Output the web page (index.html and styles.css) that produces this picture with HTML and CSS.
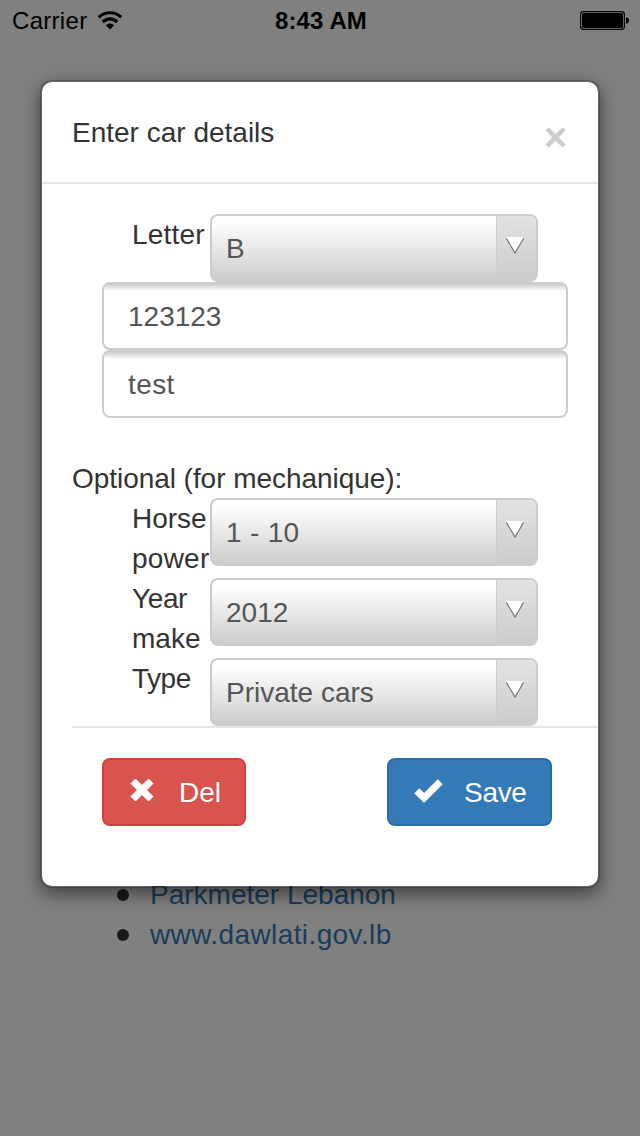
FILE: index.html
```html
<!DOCTYPE html>
<html lang="en">
<head>
<meta charset="utf-8">
<title>Enter car details</title>
<link rel="stylesheet" href="styles.css">
</head>
<body>
<div class="screen">
  <header class="status">
    <div class="status-left">
      <span class="carrier">Carrier</span>
      <svg class="wifi" width="26" height="20" viewBox="0 0 26 20">
        <path d="M1.700 6.400a16 16 0 0 1 22.600 0M5.700 11a10.300 10.300 0 0 1 14.600 0" fill="none" stroke="#000" stroke-width="3.200"/>
        <path d="M8.800 14.200a6 6 0 0 1 8.400 0L13 18.600z"/>
      </svg>
    </div>
    <span class="time">8:43 AM</span>
    <div class="status-right">
      <svg class="battery" width="50" height="20" viewBox="0 0 50 20">
        <rect x=".6" y=".6" width="43.8" height="17.8" rx="2.8" fill="none" stroke="#000" stroke-width="1.1"/>
        <rect x="2" y="2" width="41" height="15" rx="1.5"/>
        <path d="M46 6.200c2 .3 3 1.500 3 3.300s-1 3-3 3.300z"/>
      </svg>
    </div>
  </header>

  <ul class="links">
    <li><a class="parkmeter">Parkmeter Lebanon</a></li>
    <li><a class="dawlati">www.dawlati.gov.lb</a></li>
  </ul>

  <section class="modal">
    <header class="modal-header">
      <h1 class="title">Enter car details</h1>
      <span class="close">×</span>
    </header>
    <div class="modal-body">
      <div class="row first">
        <label class="label letter">Letter</label>
        <div class="select"><span class="value">B</span><span class="arrow"><svg width="20" height="18" viewBox="0 0 20 18"><path d="M1 0h18l-9 15.500z" fill="#fff"/><path d="M1.300 1.200 10 16 18.700 1.200" fill="none" stroke="#777" stroke-width="1.200"/></svg></span></div>
      </div>
      <div class="input number">123123</div>
      <div class="input test">test</div>
      <p class="optional">Optional (for mechanique):</p>
      <div class="row">
        <label class="label">Horse <span class="power">power</span></label>
        <div class="select"><span class="value range">1 - 10</span><span class="arrow"><svg width="20" height="18" viewBox="0 0 20 18"><path d="M1 0h18l-9 15.500z" fill="#fff"/><path d="M1.300 1.200 10 16 18.700 1.200" fill="none" stroke="#777" stroke-width="1.200"/></svg></span></div>
      </div>
      <div class="row">
        <label class="label"><span class="year">Year</span> make</label>
        <div class="select"><span class="value">2012</span><span class="arrow"><svg width="20" height="18" viewBox="0 0 20 18"><path d="M1 0h18l-9 15.500z" fill="#fff"/><path d="M1.300 1.200 10 16 18.700 1.200" fill="none" stroke="#777" stroke-width="1.200"/></svg></span></div>
      </div>
      <div class="row last">
        <label class="label type">Type</label>
        <div class="select"><span class="value">Private cars</span><span class="arrow"><svg width="20" height="18" viewBox="0 0 20 18"><path d="M1 0h18l-9 15.500z" fill="#fff"/><path d="M1.300 1.200 10 16 18.700 1.200" fill="none" stroke="#777" stroke-width="1.200"/></svg></span></div>
      </div>
      <footer class="modal-footer">
        <button class="btn danger">
          <svg class="cross" width="24" height="24" viewBox="0 0 24 24"><path d="M5.500 1 12 7.500 18.500 1 23 5.500 16.500 12 23 18.500 18.500 23 12 16.500 5.500 23 1 18.500 7.500 12 1 5.500z" fill="#fff" stroke="#fff" stroke-width="1" stroke-linejoin="round"/></svg>
          <span>Del</span>
        </button>
        <button class="btn primary">
          <svg class="check" width="29" height="24" viewBox="0 0 29 24"><path d="M.6 14.300 5.300 9.600 10.100 14.300 23.800.6 28.400 5.200 10.100 23.500z" fill="#fff" stroke="#fff" stroke-width=".6" stroke-linejoin="round"/></svg>
          <span class="save">Save</span>
        </button>
      </footer>
    </div>
  </section>
</div>
</body>
</html>
```
FILE: styles.css
```css
* { box-sizing: border-box; }
body {
  margin: 0;
  font: 28px/40px "Liberation Sans", Arial, sans-serif;
  color: #333;
}
.screen {
  position: relative;
  width: 640px;
  height: 1136px;
  overflow: hidden;
  background: #808080;
}
.status {
  display: grid;
  grid-template-columns: 1fr auto 1fr;
  align-items: center;
  height: 41px;
  padding: 1px 10px 0 12px;
  color: #000;
  font-size: 24px;
}
.status-left { display: flex; align-items: center; gap: 10px; }
.wifi { margin-bottom: 1px; }
.carrier { letter-spacing: .3px; }
.time { font-weight: bold; letter-spacing: .1px; }
.status-right { display: flex; justify-content: flex-end; }
.links {
  margin: 834px 0 0;
  padding: 0 0 0 150px;
  list-style: none;
  color: #1a1a1a;
}
.links li { display: flex; align-items: center; }
.links li::before {
  content: "";
  width: 12px;
  height: 12px;
  margin-left: -33px;
  margin-right: 21px;
  border-radius: 50%;
  background: #1a1a1a;
}
.links a { color: #1a3d5b; }
.dawlati { letter-spacing: .4px; }
.modal {
  position: absolute;
  left: 40px;
  top: 80px;
  width: 560px;
  height: 808px;
  border: 2px solid rgba(0, 0, 0, .2);
  border-radius: 12px;
  background: #fff;
  background-clip: padding-box;
  box-shadow: 0 6px 18px rgba(0, 0, 0, .5);
}
.modal-header {
  display: flex;
  justify-content: space-between;
  height: 102px;
  padding: 31px 31px 0 30px;
  border-bottom: 2px solid #e5e5e5;
}
.title { margin: 0; font-size: 28px; font-weight: normal; }
.close { font-size: 40px; line-height: 48px; font-weight: bold; color: #ccc; }
.modal-body { padding: 30px 0 0 30px; }
.row { display: flex; height: 80px; padding-left: 60px; }
.row.first, .row.last { height: 68px; }
.label { width: 78px; flex: none; padding-top: 1px; }
.letter { letter-spacing: .2px; }
.power { letter-spacing: .25px; }
.year { letter-spacing: -.4px; }
.type { letter-spacing: -.5px; }
.select {
  display: flex;
  width: 328px;
  height: 68px;
  border: 2px solid #ccc;
  border-radius: 8px;
  background: linear-gradient(#fff, #fcfcfc 15%, #ccc);
  color: #555;
  overflow: hidden;
}
.value { flex: 1; padding-left: 14px; line-height: 66px; }
.range { letter-spacing: .3px; }
.arrow {
  width: 40px;
  padding: 21px 0 0 8px;
  border-left: 1px solid #ccc;
  background: linear-gradient(#e2e2e2, #ccc);
}
.arrow svg { display: block; }
.input {
  width: 466px;
  height: 68px;
  margin-left: 30px;
  padding-left: 24px;
  border: 2px solid #ccc;
  border-radius: 8px;
  background: linear-gradient(#ccc, #fff 7px);
  color: #555;
  line-height: 66px;
}
.test { letter-spacing: .4px; }
.optional { height: 80px; margin: 0; padding-top: 41px; letter-spacing: -.05px; }
.modal-footer {
  display: flex;
  justify-content: space-between;
  padding: 30px 46px 0 30px;
  border-top: 2px solid #e5e5e5;
}
.btn {
  display: flex;
  align-items: center;
  height: 68px;
  padding: 2px 0 0 24px;
  border: 2px solid;
  border-radius: 8px;
  color: #fff;
  font: inherit;
}
.danger { width: 144px; border-color: #d43f3a; background: #d9534f; }
.primary { width: 165px; border-color: #2e6da4; background: #337ab7; }
.btn svg { flex: none; }
.cross { margin: 0 25px 6px 2px; }
.check { margin: 0 21px 4px 1px; }
.save { letter-spacing: -.3px; }
```
